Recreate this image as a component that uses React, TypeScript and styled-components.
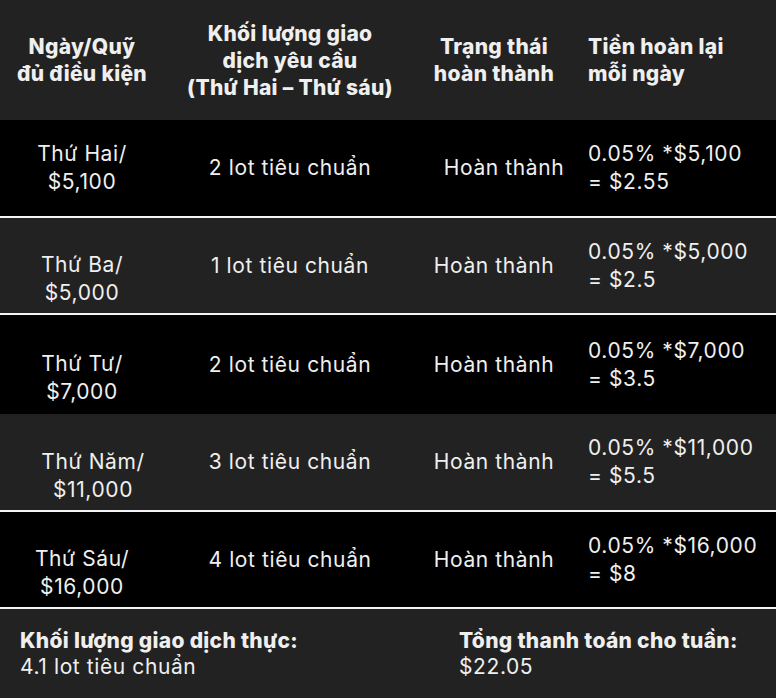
import React from "react";
import styled, { createGlobalStyle } from "styled-components";

const GlobalStyle = createGlobalStyle`
    html, body {
        margin: 0;
        padding: 0;
        background: #222222;
    }
    body {
        font-family: "Inter", "Noto Sans", sans-serif;
        color: #efefef;
    }
`

const Table = styled.div`
    width: 776px;
    display: flex;
    flex-direction: column;
`
const Row = styled.div<{ $dark?: boolean; $h: number; $line?: boolean }>`
    display: grid;
    grid-template-columns: 164px 252px 156px 1fr;
    align-items: center;
    height: ${(p) => p.$h}px;
    background: ${(p) => (p.$dark ? "#000000" : "#222222")};
    border-bottom: ${(p) => (p.$line ? "2px solid #f4f4f4" : "none")};
`
const HeadCell = styled.div<{ $left?: boolean }>`
    font-size: 21px;
    font-weight: 800;
    letter-spacing: 0.3px;
    line-height: 27px;
    white-space: nowrap;
    text-align: ${(p) => (p.$left ? "left" : "center")};
    padding-left: ${(p) => (p.$left ? "16px" : "0")};
`
const Cell = styled.div<{ $left?: boolean; $drop?: boolean; $nudge?: number }>`
    font-size: 21px;
    font-weight: 400;
    letter-spacing: 0.6px;
    line-height: 28px;
    white-space: nowrap;
    text-align: ${(p) => (p.$left ? "left" : "center")};
    padding-left: ${(p) => (p.$left ? "16px" : "0")};
    margin-top: ${(p) => (p.$drop ? "27px" : "0")};
    margin-left: ${(p) => (p.$nudge ? p.$nudge : 0)}px;
`
const Footer = styled.div`
    display: grid;
    grid-template-columns: 439px 1fr;
    align-items: center;
    height: 89px;
    padding-left: 20px;
    box-sizing: border-box;
`
const Total = styled.div`
    line-height: 26px;
    white-space: nowrap;
`
const TotalLabel = styled.div`
    font-size: 21px;
    font-weight: 800;
    letter-spacing: 0.3px;
`
const TotalValue = styled.div`
    font-size: 21px;
    font-weight: 400;
    letter-spacing: 0.6px;
`

const rows = [
    { day: "Thứ Hai/", fund: "$5,100", lots: 2, calc: "0.05% *$5,100", pay: "$2.55", h: 96, dark: true, line: true, drop: false, dayNudge: 0, nudge: 20 },
    { day: "Thứ Ba/", fund: "$5,000", lots: 1, calc: "0.05% *$5,000", pay: "$2.5", h: 95, dark: false, line: true, drop: true, dayNudge: 0, nudge: 0 },
    { day: "Thứ Tư/", fund: "$7,000", lots: 2, calc: "0.05% *$7,000", pay: "$3.5", h: 99, dark: true, line: false, drop: true, dayNudge: 0, nudge: 0 },
    { day: "Thứ Năm/", fund: "$11,000", lots: 3, calc: "0.05% *$11,000", pay: "$5.5", h: 96, dark: false, line: true, drop: true, dayNudge: 22, nudge: 0 },
    { day: "Thứ Sáu/", fund: "$16,000", lots: 4, calc: "0.05% *$16,000", pay: "$8", h: 95, dark: true, line: true, drop: true, dayNudge: 0, nudge: 0 },
]

function App() {
    return (
        <>
            <GlobalStyle />
            <Table>
                <Row $h={120}>
                    <HeadCell>Ngày/Quỹ<br />đủ điều kiện</HeadCell>
                    <HeadCell>Khối lượng giao<br />dịch yêu cầu<br />(Thứ Hai – Thứ sáu)</HeadCell>
                    <HeadCell>Trạng thái<br />hoàn thành</HeadCell>
                    <HeadCell $left>Tiền hoàn lại<br />mỗi ngày</HeadCell>
                </Row>
                {rows.map((r) => (
                    <Row key={r.day} $h={r.h} $dark={r.dark} $line={r.line}>
                        <Cell $drop={r.drop} $nudge={r.dayNudge}>{r.day}<br />{r.fund}</Cell>
                        <Cell>{r.lots} lot tiêu chuẩn</Cell>
                        <Cell $nudge={r.nudge}>Hoàn thành</Cell>
                        <Cell $left>{r.calc}<br />= {r.pay}</Cell>
                    </Row>
                ))}
                <Footer>
                    <Total>
                        <TotalLabel>Khối lượng giao dịch thực:</TotalLabel>
                        <TotalValue>4.1 lot tiêu chuẩn</TotalValue>
                    </Total>
                    <Total>
                        <TotalLabel>Tổng thanh toán cho tuần:</TotalLabel>
                        <TotalValue>$22.05</TotalValue>
                    </Total>
                </Footer>
            </Table>
        </>
    )
}

export default App;
